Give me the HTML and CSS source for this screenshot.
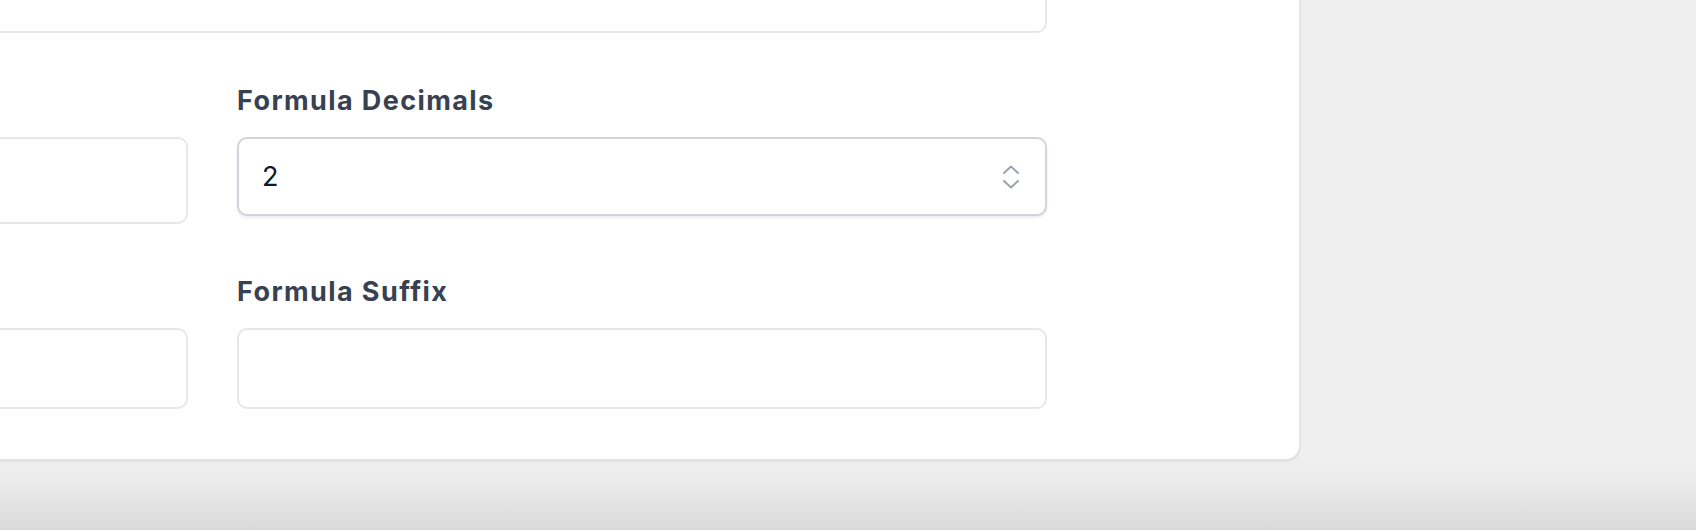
FILE: index.html
```html
<!DOCTYPE html>
<html lang="en">
<head>
<meta charset="utf-8">
<title>Formula settings</title>
<link rel="stylesheet" href="styles.css">
</head>
<body>
<div class="page">
  <div class="card">
    <div class="form-grid">
      <div class="field field-wide">
        <div class="input input-top"></div>
      </div>

      <div class="field">
        <div class="label label-empty"></div>
        <div class="input input-tall"></div>
      </div>
      <div class="field">
        <label class="label">Formula Decimals</label>
        <div class="input input-number">
          <span class="value">2</span>
          <svg class="spinner" width="18" height="24" viewBox="0 0 18 24" fill="none" stroke="#9ca3af" stroke-width="2" stroke-linecap="round" stroke-linejoin="round">
            <path d="M2 8 L9 1.5 L16 8"/>
            <path d="M2 16 L9 22.5 L16 16"/>
          </svg>
        </div>
      </div>

      <div class="field">
        <div class="label label-empty"></div>
        <div class="input input-plain"></div>
      </div>
      <div class="field">
        <label class="label">Formula Suffix</label>
        <div class="input input-plain"></div>
      </div>
    </div>
  </div>
</div>
</body>
</html>
```

FILE: styles.css
```css
html, body {
  margin: 0;
  padding: 0;
  height: 530px;
  overflow: hidden;
}

body {
  background: linear-gradient(to bottom, #efefef 0, #efefef 458px, #ececec 480px, #d9d9d9 530px);
  font-family: Inter, "Noto Sans", "Liberation Sans", sans-serif;
}

.page {
  width: 1300px;
}

.card {
  margin-left: -874px;
  margin-top: -97px;
  width: 2174px;
  box-sizing: border-box;
  padding: 49px 252px 50px 252px;
  background: #ffffff;
  border: 1px solid #e4e4e7;
  border-radius: 14px;
  box-shadow: 0 1px 3px rgba(0, 0, 0, 0.1);
}

.form-grid {
  display: grid;
  grid-template-columns: 809px 810px;
  column-gap: 49px;
  row-gap: 51px;
  align-items: start;
}

.field {
  display: flex;
  flex-direction: column;
  gap: 21px;
}

.field-wide {
  grid-column: 1 / span 2;
}

.label {
  font-size: 27px;
  line-height: 34px;
  height: 32px;
  font-weight: 700;
  color: #374151;
  letter-spacing: 1.4px;
}

.input {
  box-sizing: border-box;
  border: 2px solid #e5e7eb;
  border-radius: 10px;
  background: #ffffff;
}

.input-top {
  height: 80px;
}

.input-tall {
  height: 87px;
}

.input-plain {
  height: 81px;
}

.input-number {
  height: 79px;
  border-color: #d1d5db;
  box-shadow: 0 2px 3px rgba(0, 0, 0, 0.08);
  display: flex;
  align-items: center;
  justify-content: space-between;
  padding: 0 25px 0 23px;
}

.value {
  font-size: 27px;
  color: #111827;
  line-height: 1;
}

.spinner {
  display: block;
  margin-top: 1px;
}
```
